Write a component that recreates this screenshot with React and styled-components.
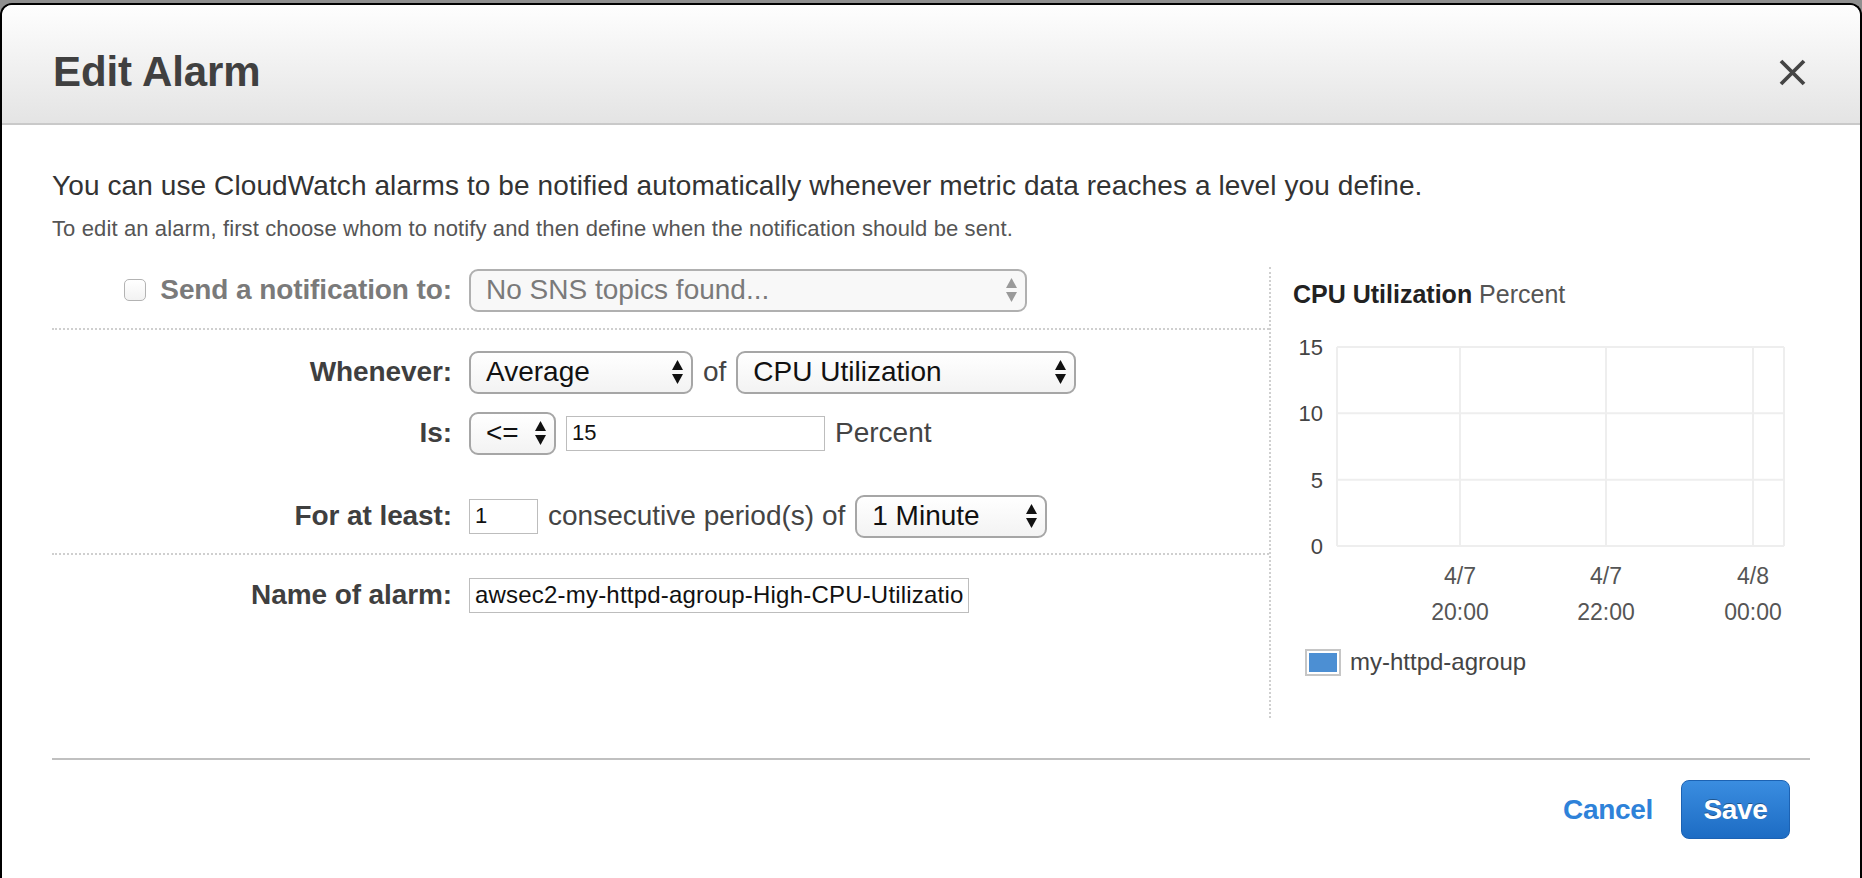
import React from 'react'
import styled, { createGlobalStyle } from 'styled-components'

const Global = createGlobalStyle`
html, body {
  margin: 0;
  padding: 0;
  background: #8f8f8f;
  overflow: hidden;
}
* { box-sizing: border-box; }
`

const Modal = styled.div`
margin-top: 3px;
height: 875px;
background: #fff;
border: 2px solid #000;
border-bottom: none;
border-radius: 12px 12px 0 0;
overflow: hidden;
font-family: "Liberation Sans", Arial, sans-serif;
`

const Header = styled.div`
height: 120px;
display: flex;
align-items: center;
justify-content: space-between;
padding: 16px 54px 0 51px;
background: linear-gradient(#fefefe, #e4e4e4);
border-bottom: 2px solid #c9c9c9;
`

const Title = styled.h1`
margin: 0;
font-size: 42px;
font-weight: bold;
color: #404040;
letter-spacing: -0.1px;
`

const Body = styled.div`
padding: 44px 50px 0 50px;
`

const Lead = styled.p`
margin: 0;
font-size: 28px;
line-height: 34px;
color: #333;
letter-spacing: 0.1px;
`

const Note = styled.p`
margin: 12px 0 0;
font-size: 22px;
line-height: 28px;
color: #555;
letter-spacing: 0.12px;
`

const Form = styled.div`
margin-top: 24px;
display: flex;
height: 451px;
`

const LeftPanel = styled.div`
width: 1217px;
flex-shrink: 0;
`

const Section = styled.div`
padding: ${p => p.$pad};
border-bottom: ${p => (p.$last ? 'none' : '2px dotted #cfcfcf')};
`

const Row = styled.div`
display: grid;
grid-template-columns: 400px 1fr;
column-gap: 17px;
align-items: center;
height: 44px;
margin-top: ${p => p.$mt || 0}px;
`

const Label = styled.div`
display: flex;
justify-content: flex-end;
align-items: center;
gap: 14px;
font-size: 28px;
font-weight: bold;
color: ${p => (p.$muted ? '#7a7a7a' : '#3f3f3f')};
letter-spacing: -0.1px;
`

const Check = styled.span`
width: 22px;
height: 22px;
border: 1.5px solid #b3b3b3;
border-radius: 5px;
background: linear-gradient(#fff, #f2f2f2);
`

const Controls = styled.div`
display: flex;
align-items: center;
gap: 10px;
font-size: 28px;
color: #444;
`

const SelectBox = styled.div`
width: ${p => p.$w}px;
height: 43px;
display: flex;
align-items: center;
justify-content: space-between;
padding: 0 7px 0 15px;
border: 2px solid ${p => (p.$disabled ? '#b0b0b0' : '#a6a6a6')};
border-radius: 9px;
background: ${p => (p.$disabled ? '#f8f8f8' : 'linear-gradient(#ffffff, #f3f3f3)')};
font-size: 28px;
color: ${p => (p.$disabled ? '#7a7a7a' : '#111')};
white-space: nowrap;
`

const TextInput = styled.input`
width: ${p => p.$w}px;
height: 35px;
padding: 0 5px;
border: 1.5px solid #bdbdbd;
border-radius: 0;
font-family: "Liberation Sans", Arial, sans-serif;
font-size: ${p => p.$fs || 22}px;
letter-spacing: ${p => p.$ls || 0}px;
color: #111;
background: #fff;
outline: none;
`

const RightPanel = styled.div`
flex: 1;
min-width: 0;
border-left: 2px dotted #cfcfcf;
padding: 12px 0 0 22px;
`

const ChartTitle = styled.div`
font-size: 25px;
line-height: 30px;
color: #555;
b { color: #222; }
`

const ChartSvg = styled.svg`
display: block;
margin-top: 21px;
`

const Legend = styled.div`
display: flex;
align-items: center;
gap: 9px;
margin: 18px 0 0 12px;
font-size: 24px;
color: #444;
`

const Swatch = styled.span`
width: 36px;
height: 27px;
border: 2px solid #c6c6c6;
padding: 2px;
span {
  display: block;
  width: 100%;
  height: 100%;
  background: #4c8fd3;
}
`

const Footer = styled.div`
margin-top: 40px;
border-top: 2px solid #c0c0c0;
padding: 20px 20px 0 0;
display: flex;
justify-content: flex-end;
align-items: center;
gap: 28px;
`

const LinkButton = styled.span`
font-size: 28px;
font-weight: bold;
color: #2e82d9;
letter-spacing: -0.3px;
`

const SaveButton = styled.span`
width: 109px;
height: 59px;
display: flex;
align-items: center;
justify-content: center;
border: 1.5px solid #1c62b3;
border-radius: 8px;
background: linear-gradient(#3a8de0, #1d6cc4);
color: #fff;
font-size: 28px;
font-weight: bold;
text-shadow: 0 -1px 0 rgba(0, 0, 0, 0.35);
letter-spacing: -0.3px;
`

const Arrows = ({ color = '#111' }) => (
  <svg width="13" height="26" viewBox="0 0 13 26">
    <path d="M6.5 1 L12 11 L1 11 Z" fill={color} />
    <path d="M6.5 25 L12 15 L1 15 Z" fill={color} />
  </svg>
)

const CloseIcon = () => (
  <svg width="27" height="27" viewBox="0 0 27 27">
    <path d="M2 2 L25 25 M25 2 L2 25" stroke="#444" strokeWidth="3.8" />
  </svg>
)

const Select = ({ w, children, disabled }) => (
  <SelectBox $w={w} $disabled={disabled}>
    <span>{children}</span>
    <Arrows color={disabled ? '#9a9a9a' : '#111'} />
  </SelectBox>
)

const yTicks = [15, 10, 5, 0]
const xTicks = [
  { x: 167, d: '4/7', t: '20:00' },
  { x: 313, d: '4/7', t: '22:00' },
  { x: 460, d: '4/8', t: '00:00' },
]

const Chart = () => {
  const top = 17
  const bottom = 216
  const left = 44
  const right = 491
  const step = (bottom - top) / 3
  return (
    <ChartSvg width="505" height="300" viewBox="0 0 505 300">
      {yTicks.map((v, i) => (
        <g key={v}>
          <line x1={left} x2={right} y1={top + i * step} y2={top + i * step} stroke="#eeeeee" strokeWidth="2" />
          <text x="30" y={top + i * step + 8} textAnchor="end" fontSize="22" fill="#444" fontFamily="Liberation Sans, Arial, sans-serif">{v}</text>
        </g>
      ))}
      <line x1={left} x2={left} y1={top} y2={bottom} stroke="#eeeeee" strokeWidth="2" />
      <line x1={right} x2={right} y1={top} y2={bottom} stroke="#eeeeee" strokeWidth="2" />
      {xTicks.map(tk => (
        <g key={tk.t}>
          <line x1={tk.x} x2={tk.x} y1={top} y2={bottom} stroke="#eeeeee" strokeWidth="2" />
          <text x={tk.x} y="254" textAnchor="middle" fontSize="23" fill="#555" fontFamily="Liberation Sans, Arial, sans-serif">{tk.d}</text>
          <text x={tk.x} y="290" textAnchor="middle" fontSize="23" fill="#555" fontFamily="Liberation Sans, Arial, sans-serif">{tk.t}</text>
        </g>
      ))}
    </ChartSvg>
  )
}

const App = () => {
  return (
    <>
      <Global />
      <Modal>
        <Header>
          <Title>Edit Alarm</Title>
          <CloseIcon />
        </Header>
        <Body>
          <Lead>You can use CloudWatch alarms to be notified automatically whenever metric data reaches a level you define.</Lead>
          <Note>To edit an alarm, first choose whom to notify and then define when the notification should be sent.</Note>
          <Form>
            <LeftPanel>
              <Section $pad="1px 0 16px">
                <Row>
                  <Label $muted>
                    <Check />
                    Send a notification to:
                  </Label>
                  <Controls>
                    <Select w={558} disabled>No SNS topics found...</Select>
                  </Controls>
                </Row>
              </Section>
              <Section $pad="20px 0 15px">
                <Row>
                  <Label>Whenever:</Label>
                  <Controls>
                    <Select w={224}>Average</Select>
                    of
                    <Select w={340}>CPU Utilization</Select>
                  </Controls>
                </Row>
                <Row $mt={17}>
                  <Label>Is:</Label>
                  <Controls>
                    <Select w={87}>&lt;=</Select>
                    <TextInput $w={259} readOnly value="15" />
                    Percent
                  </Controls>
                </Row>
                <Row $mt={39}>
                  <Label>For at least:</Label>
                  <Controls>
                    <TextInput $w={69} readOnly value="1" />
                    consecutive period(s) of
                    <Select w={192}>1 Minute</Select>
                  </Controls>
                </Row>
              </Section>
              <Section $pad="18px 0 0" $last>
                <Row>
                  <Label>Name of alarm:</Label>
                  <Controls>
                    <TextInput $w={500} $fs={24} $ls={0.2} readOnly value="awsec2-my-httpd-agroup-High-CPU-Utilization" />
                  </Controls>
                </Row>
              </Section>
            </LeftPanel>
            <RightPanel>
              <ChartTitle><b>CPU Utilization</b> Percent</ChartTitle>
              <Chart />
              <Legend>
                <Swatch><span /></Swatch>
                my-httpd-agroup
              </Legend>
            </RightPanel>
          </Form>
          <Footer>
            <LinkButton>Cancel</LinkButton>
            <SaveButton>Save</SaveButton>
          </Footer>
        </Body>
      </Modal>
    </>
  )
}

export default App
